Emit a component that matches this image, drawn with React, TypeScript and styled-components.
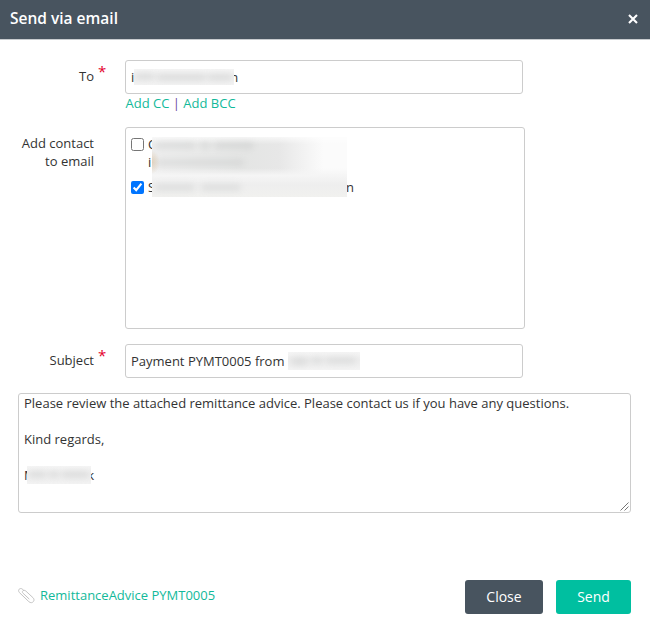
import React from "react";
import styled, { createGlobalStyle } from "styled-components";

const GlobalStyle = createGlobalStyle`
  * { box-sizing: border-box; }
  body {
    margin: 0;
    background: #fff;
    color: #333;
    font: 13px/18px "Open Sans", sans-serif;
  }
`;

const Dialog = styled.div`
  width: 650px;
  height: 636px;
  background: #fff;
  overflow: hidden;
`;

const Header = styled.header`
  display: flex;
  align-items: center;
  justify-content: space-between;
  height: 40px;
  padding: 0 12px 3px 10px;
  background: #48545f;
  border-bottom: 1px solid #c8cbce;
  color: #fff;
`;

const Title = styled.h1`
  margin: 0;
  font-size: 15.5px;
  line-height: 20px;
  font-weight: 600;
`;

const CloseIcon = styled.svg`
  display: block;
  width: 10px;
  height: 10px;
  margin-top: 2px;
`;

const Form = styled.main`
  padding: 20px 19px 0 18px;
`;

const Field = styled.div<{ $height: number }>`
  display: grid;
  grid-template-columns: 76px 31px 1fr;
  height: ${(p) => p.$height}px;
`;

const Label = styled.div`
  padding-top: 7px;
  text-align: right;
`;

const Required = styled.span`
  padding: 2px 0 0 4px;
  color: #e4002b;
  font-size: 15px;
`;

const TextBox = styled.div`
  display: flex;
  align-items: center;
  width: 398px;
  height: 34px;
  padding: 0 5px 1px;
  border: 1px solid #ccc;
  border-radius: 3px;
  white-space: pre;
`;

const Links = styled.div`
  padding-left: 0.5px;
  white-space: pre;
  color: #6b4a99;
`;

const Link = styled.a`
  color: #12b99a;
  text-decoration: none;
`;

const ContactList = styled.div`
  position: relative;
  width: 400px;
  height: 202px;
  padding: 7px 5px;
  border: 1px solid #ccc;
  border-radius: 3px;
`;

const Contact = styled.label`
  display: flex;
  align-items: flex-start;
  margin-bottom: 7px;
`;

const Check = styled.input`
  width: 13px;
  height: 13px;
  margin: 3px 4px 0 0;
`;

const ContactText = styled.span`
  display: flex;
  flex-direction: column;
  width: 202px;
`;

const Tail = styled.span`
  margin-left: -4px;
`;

const Redaction = styled.span<{ $width: number; $height: number; $overlap?: number }>`
  position: relative;
  z-index: 1;
  flex: none;
  width: ${(p) => p.$width}px;
  height: ${(p) => p.$height}px;
  margin-left: ${(p) => -(p.$overlap ?? 0)}px;
  overflow: hidden;
  background: linear-gradient(#f5f5f5, #ededed 45%, #f3f3f3);
`;

const ContactRedaction = styled.span`
  position: absolute;
  left: 26px;
  top: 9px;
  width: 195px;
  height: 60px;
  overflow: hidden;
  background:
    radial-gradient(ellipse 8px 12px at 0 25px, #dac3a3aa, transparent),
    linear-gradient(to bottom, #ffffffaa, transparent 12%, transparent 52%, #f5f5f5 64%, #eeeeee 80%, #f1f1ef),
    linear-gradient(to right, #eeeeee, #e4e5e4 48%, #e7e7e7 65%, #fbfbfb 88%);
`;

const Smudge = styled.i<{ $left: number; $top: number; $width: number; $height?: number }>`
  position: absolute;
  left: ${(p) => p.$left}px;
  top: ${(p) => p.$top}px;
  width: ${(p) => p.$width}px;
  height: ${(p) => p.$height ?? 7}px;
  border-radius: 4px;
  background: #b9bbbb;
  opacity: 0.3;
  filter: blur(3px);
`;

const Message = styled.div`
  position: relative;
  width: 613px;
  height: 120px;
  padding: 0 5px;
  border: 1px solid #ccc;
  border-radius: 3px;
`;

const Line = styled.div`
  display: flex;
  align-items: center;
  height: 18px;
`;

const Grip = styled.svg`
  position: absolute;
  right: 1px;
  bottom: 1px;
  width: 9px;
  height: 9px;
`;

const Footer = styled.footer`
  display: flex;
  align-items: center;
  height: 34px;
  margin-top: 67px;
`;

const Attachment = styled.div`
  display: flex;
  align-items: center;
  gap: 5px;
  flex: 1;
  padding-bottom: 4px;
`;

const Paperclip = styled.svg`
  width: 17px;
  height: 17px;
  margin-top: 1px;
`;

const Button = styled.button<{ $primary?: boolean }>`
  width: ${(p) => (p.$primary ? 75 : 78)}px;
  height: 34px;
  margin-left: ${(p) => (p.$primary ? 13 : 0)}px;
  padding: 0;
  border: 0;
  border-radius: 3px;
  background: ${(p) => (p.$primary ? "#00bfa0" : "#48545f")};
  color: #fff;
  font: 14px/20px "Open Sans", sans-serif;
`;

export default function App() {
  return (
    <>
      <GlobalStyle />
      <Dialog role="dialog">
        <Header>
          <Title>Send via email</Title>
          <CloseIcon viewBox="0 0 10 10">
            <path d="M1 1l8 8M9 1L1 9" stroke="#fff" strokeWidth="2.1" />
          </CloseIcon>
        </Header>
        <Form>
          <Field $height={67}>
            <Label>To</Label>
            <Required>*</Required>
            <div>
              <TextBox>
                <span>i</span>
                <Redaction $width={100} $height={16}>
                  <Smudge $left={2} $top={4} $width={18} />
                  <Smudge $left={23} $top={5} $width={49} />
                  <Smudge $left={74} $top={5} $width={24} />
                </Redaction>
                <Tail>n</Tail>
              </TextBox>
              <Links>
                <Link>Add CC</Link> | <Link>Add BCC</Link>
              </Links>
            </div>
          </Field>
          <Field $height={217}>
            <Label>Add contact to email</Label>
            <span />
            <ContactList>
              <Contact>
                <Check type="checkbox" />
                <ContactText>
                  <span>C</span>
                  <span>i</span>
                </ContactText>
              </Contact>
              <Contact>
                <Check type="checkbox" defaultChecked />
                <ContactText>S</ContactText>
                <Tail>n</Tail>
              </Contact>
              <ContactRedaction>
                <Smudge $left={3} $top={5} $width={40} />
                <Smudge $left={48} $top={5} $width={10} />
                <Smudge $left={62} $top={5} $width={40} />
                <Smudge $left={4} $top={22} $width={88} />
                <Smudge $left={3} $top={47} $width={40} />
                <Smudge $left={49} $top={47} $width={40} />
              </ContactRedaction>
            </ContactList>
          </Field>
          <Field $height={49}>
            <Label>Subject</Label>
            <Required>*</Required>
            <TextBox>
              <span>Payment PYMT0005 from </span>
              <Redaction $width={72} $height={18}>
                <Smudge $left={3} $top={5} $width={17} $height={9} />
                <Smudge $left={23} $top={5} $width={12} />
                <Smudge $left={38} $top={5} $width={30} />
              </Redaction>
            </TextBox>
          </Field>
          <Message>
            <Line>Please review the attached remittance advice. Please contact us if you have any questions.</Line>
            <Line />
            <Line>Kind regards,</Line>
            <Line />
            <Line>
              <span>M</span>
              <Redaction $width={64} $height={18} $overlap={8.5}>
                <Smudge $left={2} $top={5} $width={17} />
                <Smudge $left={22} $top={5} $width={10} />
                <Smudge $left={35} $top={5} $width={27} />
              </Redaction>
              <Tail>k</Tail>
            </Line>
            <Grip viewBox="0 0 9 9">
              <path d="M.5 8.5l8-8M4.5 8.5l4-4" stroke="#666" strokeWidth=".9" />
            </Grip>
          </Message>
          <Footer>
            <Attachment>
              <Paperclip viewBox="0 0 17 17" fill="none" stroke="#c4c4c4" strokeWidth="1">
                <path d="M6 4L4.6 2.2C2 .2-.8 3 1.4 5.6l9.4 9c3 2.9 7-.8 4.3-3.8L7.8 4C5.6 2.2 3.2 4.4 5.1 6.3l6.2 5.8" />
              </Paperclip>
              <Link>RemittanceAdvice PYMT0005</Link>
            </Attachment>
            <Button>Close</Button>
            <Button $primary>Send</Button>
          </Footer>
        </Form>
      </Dialog>
    </>
  );
}
